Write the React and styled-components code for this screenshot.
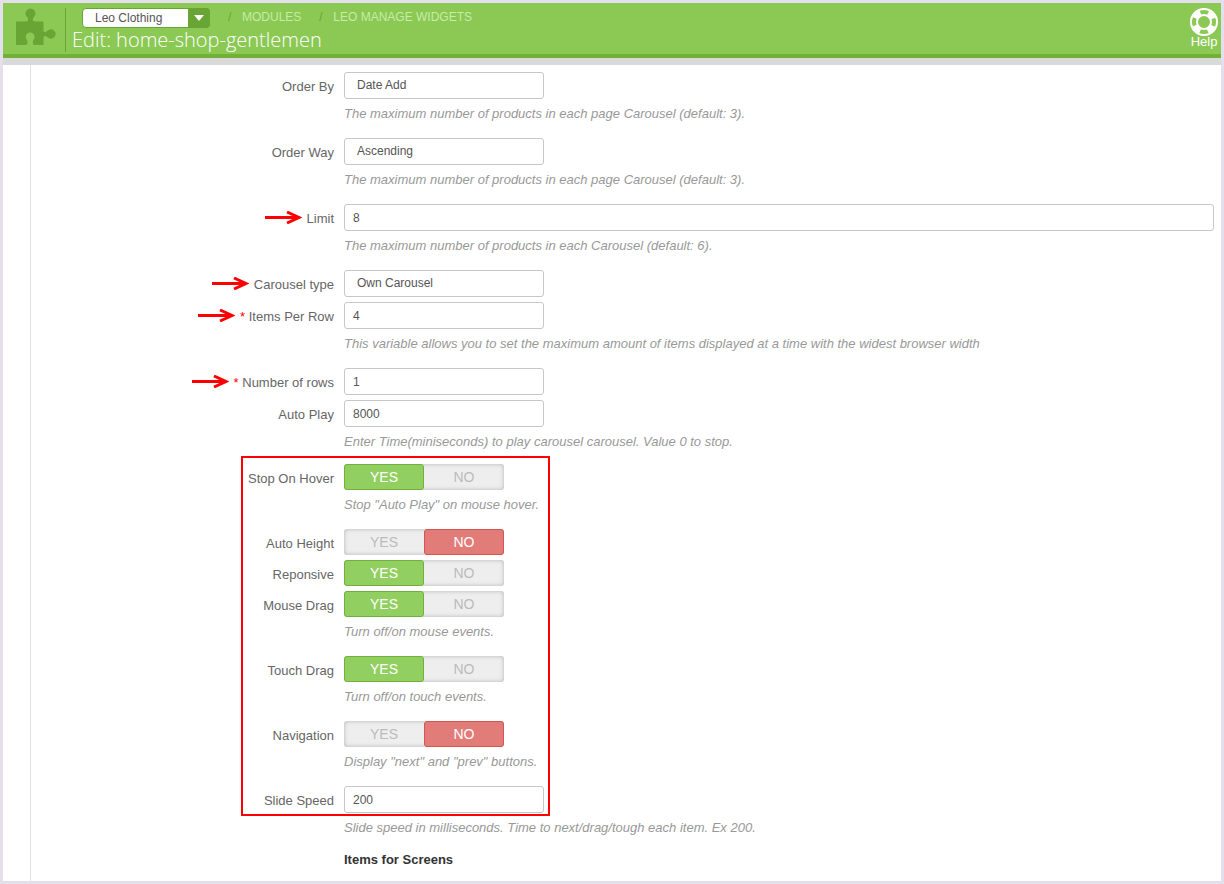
import React, { useState } from 'react'
import styled, { createGlobalStyle } from 'styled-components'

const FIELDS = [
    { id: 'order_by', label: 'Order By', type: 'select', value: 'Date Add', options: ['Date Add', 'Date Update', 'Name', 'Price'], help: 'The maximum number of products in each page Carousel (default: 3).' },
    { id: 'order_way', label: 'Order Way', type: 'select', value: 'Ascending', options: ['Ascending', 'Descending'], help: 'The maximum number of products in each page Carousel (default: 3).' },
    { id: 'limit', label: 'Limit', type: 'text', value: '8', wide: true, arrow: true, help: 'The maximum number of products in each Carousel (default: 6).' },
    { id: 'carousel_type', label: 'Carousel type', type: 'select', value: 'Own Carousel', options: ['Own Carousel', 'Bootstrap'], arrow: true },
    { id: 'items_per_row', label: 'Items Per Row', type: 'text', value: '4', required: true, arrow: true, help: 'This variable allows you to set the maximum amount of items displayed at a time with the widest browser width' },
    { id: 'number_rows', label: 'Number of rows', type: 'text', value: '1', required: true, arrow: true },
    { id: 'auto_play', label: 'Auto Play', type: 'text', value: '8000', help: 'Enter Time(miniseconds) to play carousel carousel. Value 0 to stop.' },
]

const MARKED_FIELDS = [
    { id: 'stop_hover', label: 'Stop On Hover', type: 'switch', value: true, help: 'Stop "Auto Play" on mouse hover.' },
    { id: 'auto_height', label: 'Auto Height', type: 'switch', value: false },
    { id: 'responsive', label: 'Reponsive', type: 'switch', value: true },
    { id: 'mouse_drag', label: 'Mouse Drag', type: 'switch', value: true, help: 'Turn off/on mouse events.' },
    { id: 'touch_drag', label: 'Touch Drag', type: 'switch', value: true, help: 'Turn off/on touch events.' },
    { id: 'navigation', label: 'Navigation', type: 'switch', value: false, help: 'Display "next" and "prev" buttons.' },
    { id: 'slide_speed', label: 'Slide Speed', type: 'text', value: '200', help: 'Slide speed in milliseconds. Time to next/drag/tough each item. Ex 200.' },
]

function PuzzleIcon() {
    return (
        <svg width='40' height='37' viewBox='0 0 40 37' fill='#69a534' aria-hidden='true'>
            <path d='M0 13.500 H9.500 C12.500 13.500 12.700 11.500 11.500 9.500 A5 5 0 1 1 17.500 9.500 C16.300 11.500 16.500 13.500 19.500 13.500 H27.500 V22 C27.500 24.300 29 24.800 31.500 22.800 A4.700 4.700 0 1 1 31.500 29.200 C29 27.300 27.500 27.800 27.500 30 V37 H19 C16.600 37 16.400 34.500 17.300 32 A4.400 4.400 0 1 0 11 32 C12 34.500 11.700 37 9.500 37 H0 Z' />
        </svg>
    )
}

function HelpIcon() {
    return (
        <svg width='28' height='28' viewBox='0 0 28 28' fill='none' stroke='#fff' aria-hidden='true'>
            <circle cx='14' cy='14' r='13' strokeWidth='2' />
            <circle cx='14' cy='14' r='7' strokeWidth='2' />
            <circle cx='14' cy='14' r='10' strokeWidth='6' strokeDasharray='7.854 7.854' strokeDashoffset='-3.927' />
        </svg>
    )
}

function Arrow() {
    return (
        <svg width='37' height='13' viewBox='0 0 37 13' fill='none' stroke='#f00' strokeWidth='3' aria-hidden='true'>
            <path d='M0 6.500 H34' />
            <path d='M22 1 L34 6.500 L22 12' />
        </svg>
    )
}

function Field({ field }) {
    const [value, setValue] = useState(field.value)
    const { id, label, type } = field

    return (
        <Row $help={!!field.help} $short={type === 'switch'}>
            <LabelCol>
                {field.arrow && <Arrow />}
                <FieldLabel as={type === 'switch' ? 'span' : 'label'} id={id + '_label'} htmlFor={type === 'switch' ? undefined : id}>
                    {field.required && <Star>* </Star>}{label}
                </FieldLabel>
            </LabelCol>
            <ControlCol>
                {type === 'text' && <TextInput id={id} type='text' $wide={field.wide} value={value} onChange={(e) => setValue(e.target.value)} />}
                {type === 'select' && (
                    <SelectInput id={id} value={value} onChange={(e) => setValue(e.target.value)}>
                        {field.options.map((o) => <option key={o}>{o}</option>)}
                    </SelectInput>
                )}
                {type === 'switch' && (
                    <Switch role='radiogroup' aria-labelledby={id + '_label'}>
                        <SwitchOption $on={value} $tone='green'>
                            <SwitchRadio type='radio' name={id} checked={value} onChange={() => setValue(true)} />
                            YES
                        </SwitchOption>
                        <SwitchOption $on={!value} $tone='red'>
                            <SwitchRadio type='radio' name={id} checked={!value} onChange={() => setValue(false)} />
                            NO
                        </SwitchOption>
                    </Switch>
                )}
                {field.help && <HelpText>{field.help}</HelpText>}
            </ControlCol>
        </Row>
    )
}

function App() {
    return (
        <Page>
            <GlobalStyle />
            <Header>
                <PuzzleIcon />
                <HeaderMain>
                    <TopLine>
                        <ShopPicker>
                            <ShopSelect aria-label='Shop' defaultValue='Leo Clothing'>
                                <option>Leo Clothing</option>
                            </ShopSelect>
                            <Caret>
                                <svg width='10' height='6' viewBox='0 0 10 6' fill='#fff' aria-hidden='true'><path d='M0 0 H10 L5 6 Z' /></svg>
                            </Caret>
                        </ShopPicker>
                        <Crumbs>
                            <Slash>/</Slash>
                            <Crumb href='#modules'>MODULES</Crumb>
                            <Slash>/</Slash>
                            <Crumb href='#widgets'>LEO MANAGE WIDGETS</Crumb>
                        </Crumbs>
                    </TopLine>
                    <Title>Edit: home-shop-gentlemen</Title>
                </HeaderMain>
                <HelpLink href='#help'>
                    <HelpIcon />
                    Help
                </HelpLink>
            </Header>
            <Body>
                <Sidebar />
                <Form onSubmit={(e) => e.preventDefault()}>
                    {FIELDS.map((f) => <Field key={f.id} field={f} />)}
                    <MarkedGroup>
                        {MARKED_FIELDS.map((f) => <Field key={f.id} field={f} />)}
                        <Marker />
                    </MarkedGroup>
                    <SectionTitle>Items for Screens</SectionTitle>
                </Form>
            </Body>
        </Page>
    )
}

export default App

const GlobalStyle = createGlobalStyle`
    * {
        box-sizing: border-box;
    }
    body {
        margin: 0;
        background-color: #fff;
        font-family: "Liberation Sans", Arial, sans-serif;
        font-size: 13px;
        color: #666;
    }
`

const Page = styled.div`
    display: flex;
    flex-direction: column;
    min-height: 100vh;
    border: 3px solid #e3dfec;
`

const Header = styled.header`
    display: flex;
    align-items: flex-start;
    gap: 9px;
    padding: 5px 3px 2px 13px;
    background-color: #8bc954;
    border-bottom: 4px solid #72b137;
`

const HeaderMain = styled.div`
    flex: 1;
    padding-left: 6px;
    border-left: 1px solid #69a534;
`

const TopLine = styled.div`
    display: flex;
    align-items: flex-start;
    padding-left: 10px;
`

const ShopPicker = styled.div`
    position: relative;
    width: 128px;
`

const ShopSelect = styled.select`
    display: block;
    width: 100%;
    height: 20px;
    padding: 0 24px 0 12px;
    appearance: none;
    border: 1px solid #69a534;
    border-radius: 4px;
    background-color: #fff;
    font-family: inherit;
    font-size: 12px;
    color: #555;
`

const Caret = styled.span`
    position: absolute;
    top: 0;
    right: 0;
    bottom: 0;
    width: 22px;
    display: flex;
    align-items: center;
    justify-content: center;
    border-radius: 0 4px 4px 0;
    background-color: #69a534;
    pointer-events: none;
`

const Crumbs = styled.nav`
    display: flex;
    padding-left: 18px;
    font-size: 12px;
    line-height: 18px;
`

const Slash = styled.span`
    width: 14px;
    color: #69a534;
`

const Crumb = styled.a`
    margin-right: 18px;
    color: #c8eba6;
    text-decoration: none;
`

const Title = styled.h1`
    margin: 0;
    font-family: "Open Sans", sans-serif;
    font-size: 20px;
    font-weight: 300;
    line-height: 24px;
    color: #fff;
`

const HelpLink = styled.a`
    display: flex;
    flex-direction: column;
    align-items: center;
    font-size: 13px;
    line-height: 12px;
    color: #fff;
    text-decoration: none;
`

const Body = styled.div`
    display: flex;
    flex: 1;
    border-top: 7px solid #d9d9d9;
`

const Sidebar = styled.aside`
    width: 28px;
    border-right: 1px solid #e0e0e0;
`

const Form = styled.form`
    flex: 1;
    padding: 7px 7px 8px 0;
`

const Row = styled.div`
    display: flex;
    gap: 10px;
    min-height: ${(props) => (props.$help ? (props.$short ? '60px' : '61px') : '0')};
    margin-bottom: 5px;
`

const LabelCol = styled.div`
    display: flex;
    flex: none;
    width: 303px;
    height: 26px;
    align-items: center;
    justify-content: flex-end;
    gap: 5px;
`

const FieldLabel = styled.label`
    line-height: 18px;
    padding-top: 3px;
`

const Star = styled.span`
    color: #f00;
`

const ControlCol = styled.div`
    flex: 1;
`

const TextInput = styled.input`
    display: block;
    width: ${(props) => (props.$wide ? '100%' : '200px')};
    height: 27px;
    padding: 0 8px;
    border: 1px solid #c7c7c7;
    border-radius: 3px;
    outline: none;
    background-color: #fff;
    font-family: inherit;
    font-size: 12px;
    color: #555;
`

const SelectInput = styled.select`
    display: block;
    width: 200px;
    height: 27px;
    padding: 0 12px 2px;
    appearance: none;
    border: 1px solid #c7c7c7;
    border-radius: 3px;
    outline: none;
    background-color: #fff;
    font-family: inherit;
    font-size: 12px;
    color: #555;
`

const Switch = styled.div`
    display: flex;
    width: 160px;
    height: 26px;
    border-radius: 3px;
    background-color: #eee;
    box-shadow: inset 0 0 4px rgba(0, 0, 0, 0.25);
`

const tones = {
    green: { fill: '#92cf61', edge: '#72b137' },
    red: { fill: '#e27c79', edge: '#d9534f' },
}

const SwitchOption = styled.label`
    display: flex;
    flex: 1;
    align-items: center;
    justify-content: center;
    border: 1px solid ${(props) => (props.$on ? tones[props.$tone].edge : 'transparent')};
    border-radius: 3px;
    background-color: ${(props) => (props.$on ? tones[props.$tone].fill : 'transparent')};
    color: ${(props) => (props.$on ? '#fff' : '#bbb')};
    font-size: 14px;
    cursor: pointer;
`

const SwitchRadio = styled.input`
    position: absolute;
    width: 1px;
    height: 1px;
    margin: 0;
    appearance: none;
    opacity: 0;
`

const HelpText = styled.p`
    margin: 6px 0 0;
    line-height: 18px;
    font-style: italic;
    color: #999;
`

const MarkedGroup = styled.div`
    position: relative;
    margin-top: -2px;
`

const Marker = styled.div`
    position: absolute;
    top: -8px;
    left: 210px;
    bottom: 31px;
    width: 309px;
    border: 2px solid #f00;
    pointer-events: none;
`

const SectionTitle = styled.h4`
    margin: 0 0 0 313px;
    font-size: 13px;
    line-height: 16px;
    color: #333;
`
